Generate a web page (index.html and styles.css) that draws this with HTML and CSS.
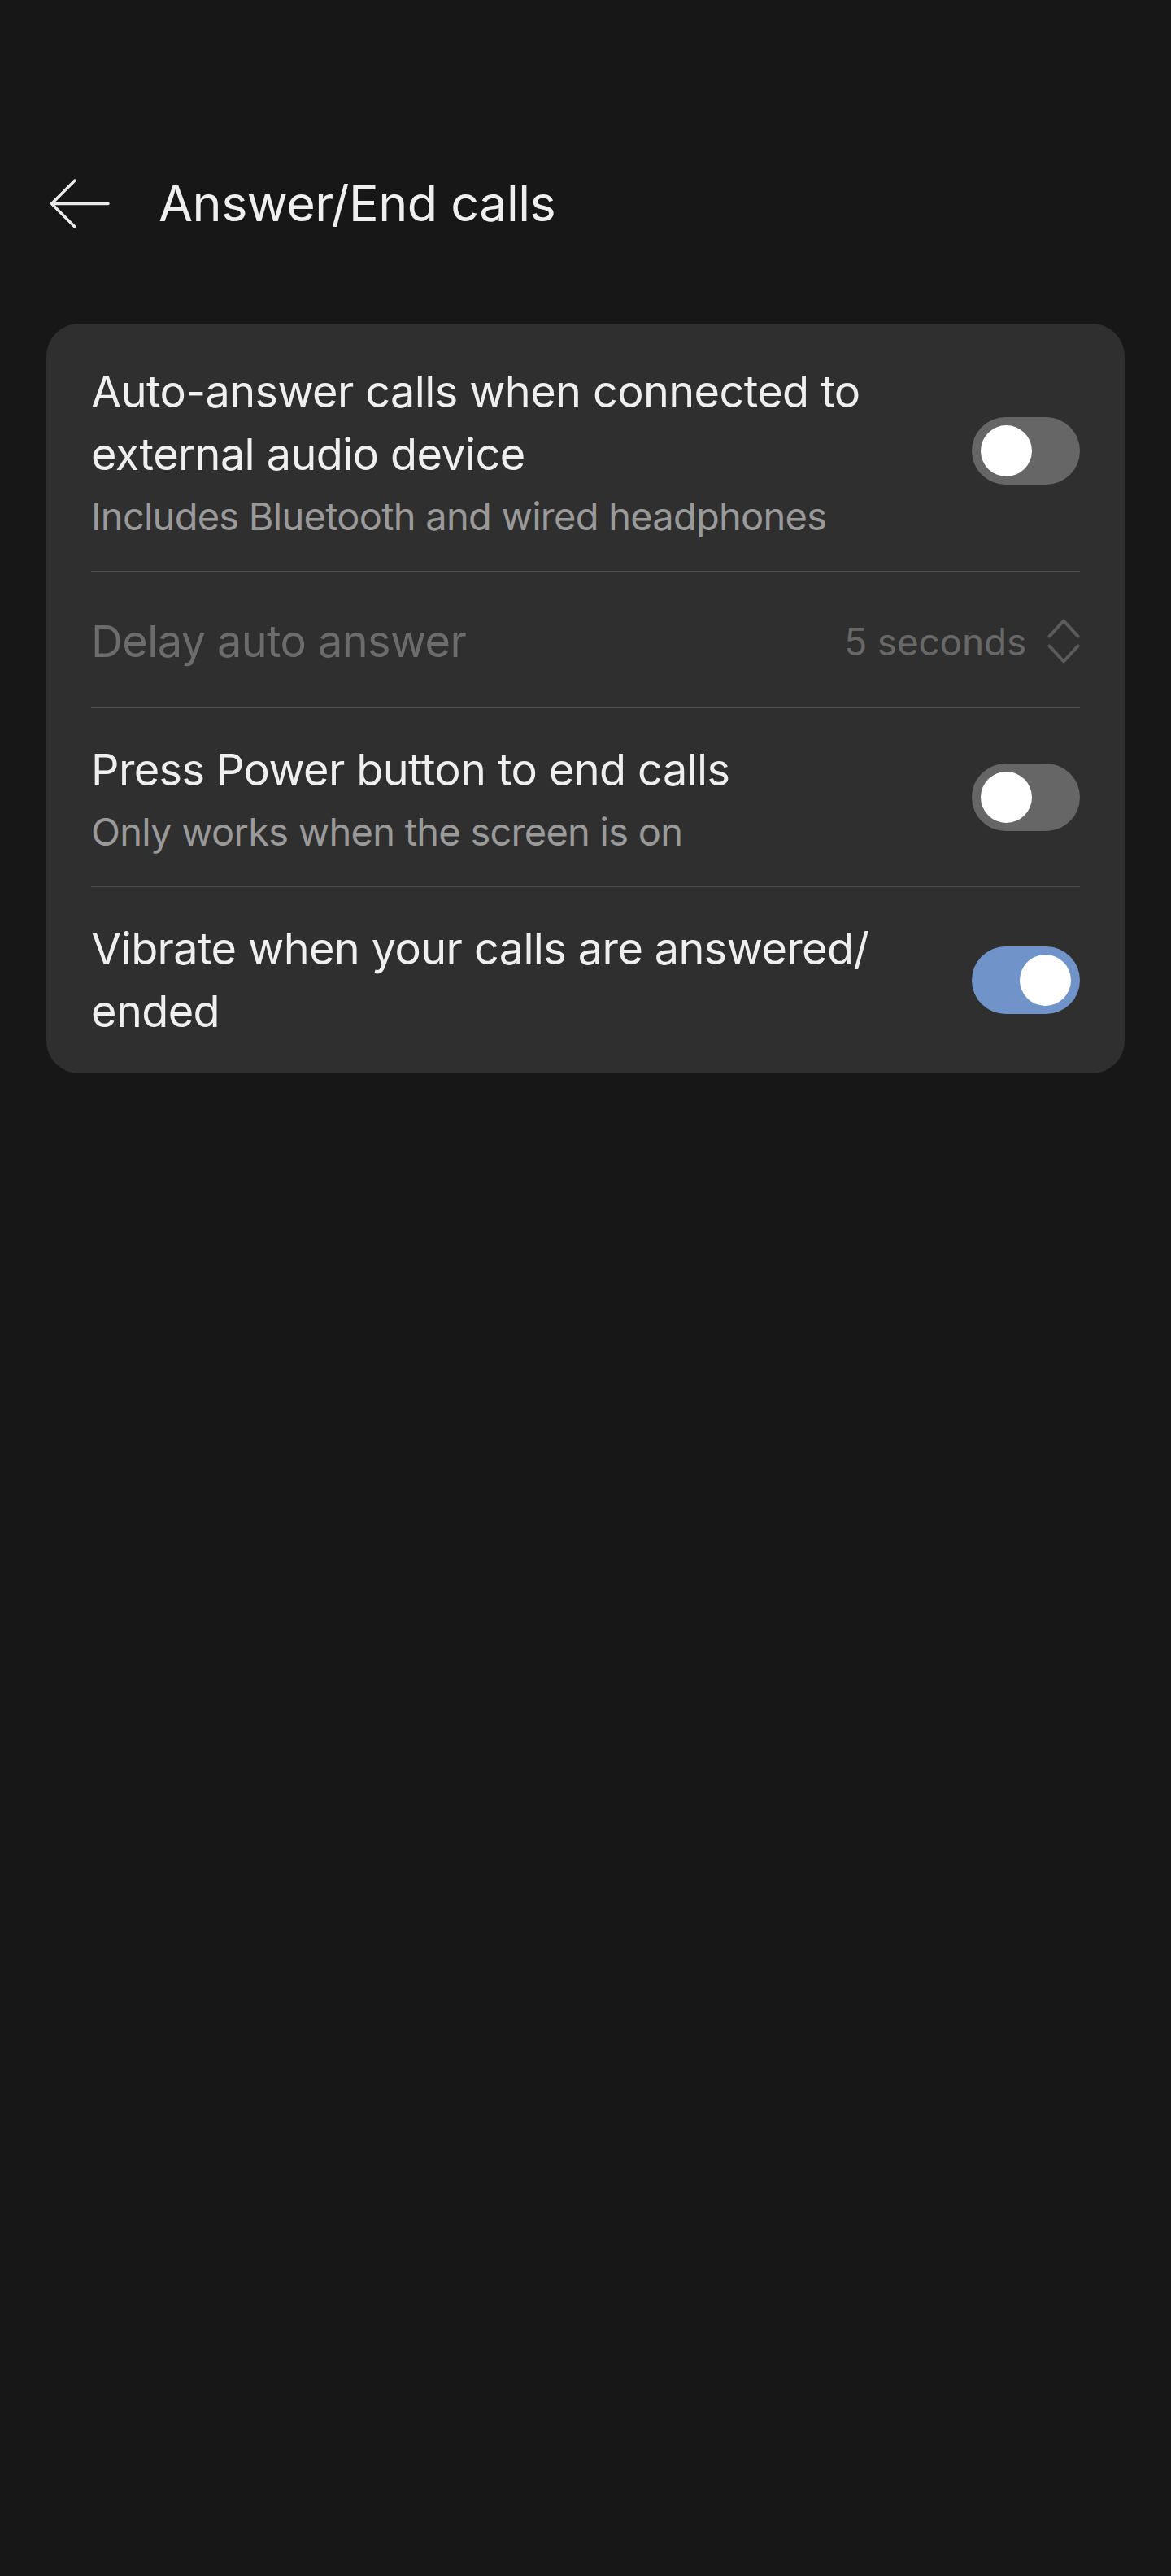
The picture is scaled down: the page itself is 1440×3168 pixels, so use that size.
FILE: index.html
```html
<!DOCTYPE html>
<html>
<head>
    <title>Answer/End calls</title>
    <link rel="stylesheet" href="styles.css">
</head>
<body>

<!-- Top bar -->
<header class="top-bar">
    <button class="back" aria-label="Back">
        <svg width="74" height="61" viewBox="0 0 74 61">
            <path d="M72 30.5 H2.5 M31 2 L2.5 30.5 L31 59" fill="none" stroke="#ebebeb" stroke-width="3.5" stroke-linecap="round" stroke-linejoin="round"/>
        </svg>
    </button>
    <h1 class="page-title">Answer/End calls</h1>
</header>

<!-- Settings list -->
<div class="card">

    <div class="row">
        <div class="row-text">
            <p class="row-title">Auto-answer calls when connected to external audio device</p>
            <p class="row-sub">Includes Bluetooth and wired headphones</p>
        </div>
        <span class="switch"><span class="knob"></span></span>
    </div>

    <div class="row row-disabled">
        <div class="row-text">
            <p class="row-title">Delay auto answer</p>
        </div>
        <div class="row-value">
            <span>5 seconds</span>
            <svg width="40" height="55" viewBox="0 0 40 55">
                <path d="M2.5 21.5 L20 2.5 L37.5 21.5 M2.5 33.5 L20 52.5 L37.5 33.5" fill="none" stroke="#5c5c5c" stroke-width="4" stroke-linecap="round" stroke-linejoin="round"/>
            </svg>
        </div>
    </div>

    <div class="row">
        <div class="row-text">
            <p class="row-title">Press Power button to end calls</p>
            <p class="row-sub">Only works when the screen is on</p>
        </div>
        <span class="switch"><span class="knob"></span></span>
    </div>

    <div class="row">
        <div class="row-text">
            <p class="row-title">Vibrate when your calls are answered/<wbr>ended</p>
        </div>
        <span class="switch on"><span class="knob"></span></span>
    </div>

</div>

</body>
</html>
```

FILE: styles.css
```css
html {
    background-color: #171717;
}

body {
    margin: 0;
    padding: 190px 57px 0 57px;
    min-height: 3168px;
    box-sizing: border-box;
    background-color: #171717;
    font-family: Inter, "Noto Sans", sans-serif;
    color: #efefef;
}

p {
    margin: 0;
}

/* Top bar */
.top-bar {
    display: flex;
    align-items: center;
    height: 120px;
    gap: 60px;
}

.back {
    display: flex;
    padding: 0;
    margin: 0 0 0 4px;
    border: none;
    background: none;
    cursor: pointer;
}

.page-title {
    margin: 0;
    font-size: 61px;
    font-weight: 400;
    letter-spacing: -0.5px;
    color: #efefef;
}

/* Card */
.card {
    margin-top: 88px;
    padding: 8px 55px 1px 55px;
    background-color: #2f2f2f;
    border-radius: 40px;
}

.row {
    display: flex;
    align-items: center;
    padding: 37px 0;
    border-top: 1px solid #4c4c4c;
}

.row:first-child {
    border-top: none;
}

.row-text {
    flex: 1;
    min-width: 0;
    margin-right: 40px;
}

.row-title {
    font-size: 54px;
    line-height: 77px;
    letter-spacing: -0.6px;
    color: #efefef;
}

.row-sub {
    margin-top: 8px;
    font-size: 47px;
    line-height: 60px;
    letter-spacing: -0.75px;
    color: #9a9a9a;
}

.row-disabled {
    padding: 47px 0 43px 0;
}

.row-disabled .row-title {
    color: #6c6c6c;
}

.row-value {
    display: flex;
    align-items: center;
    gap: 26px;
    font-size: 46px;
    letter-spacing: -0.2px;
    color: #686868;
}

/* Toggle switch */
.switch {
    display: flex;
    align-items: center;
    flex-shrink: 0;
    width: 133px;
    height: 83px;
    padding: 0 11px;
    box-sizing: border-box;
    border-radius: 42px;
    background-color: #666666;
}

.switch .knob {
    width: 63px;
    height: 63px;
    border-radius: 50%;
    background-color: #ffffff;
}

.switch.on {
    justify-content: flex-end;
    background-color: #7094c9;
}
```
